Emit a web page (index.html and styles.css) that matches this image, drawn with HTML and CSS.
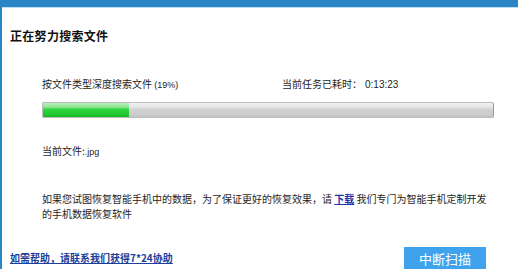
FILE: index.html
```html
<!DOCTYPE html>
<html lang="zh-CN">
<head>
<meta charset="utf-8">
<title>正在努力搜索文件</title>
<link rel="stylesheet" href="styles.css">
</head>
<body>
<div class="frame">
  <h1 class="title">正在努力搜索文件</h1>
  <div class="task">
    <div class="status">
      <span class="label">按文件类型深度搜索文件 <span class="latin">(19%)</span></span>
      <span class="label">当前任务已耗时：<span class="time">0:13:23</span></span>
    </div>
    <div class="progress"><div class="fill" style="width:19%"></div></div>
    <div class="current">当前文件:<span class="latin">.jpg</span></div>
    <p class="note"><span>如果您试图恢复智能手机中的数据，为了保证更好的恢复效果，请</span> <a class="dl" href="#">下载</a> <span>我们专门为智能手机定制开发</span><br><span>的手机数据恢复软件</span></p>
  </div>
  <div class="footer">
    <a class="help" href="#">如需帮助，请联系我们获得7*24协助</a>
    <button class="stop" type="button">中断扫描</button>
  </div>
</div>
</body>
</html>
```
FILE: styles.css
```css
html, body {
  margin: 0;
  padding: 0;
  background: #ffffff;
}
body {
  font-family: "Noto Sans CJK SC", "Liberation Sans", sans-serif;
  color: #1e1e1e;
  font-size: 10px;
  overflow: hidden;
}
.frame {
  box-sizing: border-box;
  width: 518px;
  height: 269px;
  border-top: 7px solid #2b86c8;
  border-left: 2px solid #2b86c8;
  box-shadow: inset 0 1px 0 #bfe0f5;
  padding: 22px 0 0 8px;
  display: flex;
  flex-direction: column;
}
.title {
  margin: 0;
  font-size: 12px;
  line-height: 14px;
  font-weight: bold;
  color: #111;
  letter-spacing: 0.3px;
}
.task {
  width: 452px;
  padding-left: 32px;
  margin-top: 35px;
}
.status {
  display: grid;
  grid-template-columns: 240px auto;
  line-height: 12px;
}
.latin {
  font-family: "Liberation Sans", sans-serif;
  font-size: 9px;
}
.time {
  font-family: "Liberation Sans", sans-serif;
  font-size: 10px;
  margin-left: 3px;
}
.progress {
  margin-top: 11px;
  height: 16px;
  box-sizing: border-box;
  border: 1px solid #bcbcbc;
  border-right-color: #9a9a9a;
  border-radius: 2px;
  background: linear-gradient(to bottom, #f2f2f2 0%, #e4e4e4 30%, #d2d2d2 45%, #cdcdcd 80%, #c2c2c2 100%);
  overflow: hidden;
}
.fill {
  height: 100%;
  background: linear-gradient(to bottom, #b8f0b8 0%, #8ee592 30%, #33d543 45%, #1fc92f 80%, #17b826 100%);
}
.current {
  margin-top: 27px;
  line-height: 12px;
}
.note {
  margin: 34px 0 0;
  line-height: 14.5px;
}
.dl {
  color: #1f33a8;
  font-weight: bold;
  text-decoration: underline;
}
.footer {
  margin-top: auto;
  height: 22px;
  display: flex;
  justify-content: space-between;
  align-items: flex-start;
  padding-right: 32px;
}
.help {
  margin-top: 5px;
  color: #1b3f9a;
  font-weight: bold;
  line-height: 12px;
  text-decoration: underline;
}
.stop {
  width: 82px;
  height: 24px;
  border: 0;
  margin: 0;
  padding: 0;
  background: #3ea3ec;
  color: #ffffff;
  font-family: "Noto Sans CJK SC", sans-serif;
  font-size: 13px;
  line-height: 22px;
  align-self: flex-start;
  margin-bottom: -2px;
}
```
